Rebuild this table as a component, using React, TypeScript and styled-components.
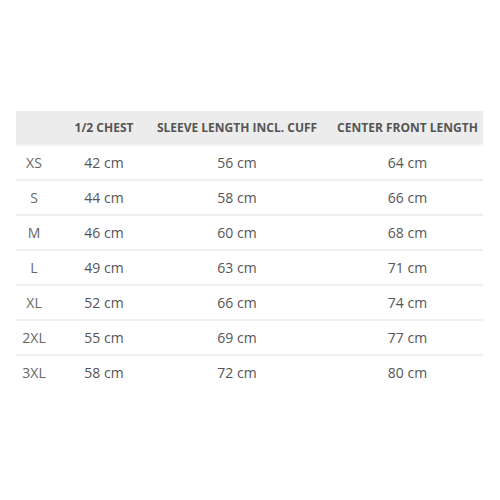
import styled, { createGlobalStyle } from "styled-components";

const GlobalStyle = createGlobalStyle`
  html, body {
    margin: 0;
    padding: 0;
    background: #ffffff;
  }
  body {
    font-family: "Open Sans", "Liberation Sans", sans-serif;
    color: #555555;
  }
`;

const Page = styled.div`
  width: 500px;
  height: 500px;
  padding: 111px 17px 0 16px;
  box-sizing: border-box;
`;

const Table = styled.div`
  display: grid;
  grid-template-columns: 36px 104px 162px 165px;
  width: 467px;
`;

const HeaderRow = styled.div`
  display: contents;
`;

const HeadCell = styled.div<{ $shift?: number }>`
  height: 33px;
  background: #ececec;
  border-bottom: 2px solid #f4f4f4;
  display: flex;
  align-items: center;
  justify-content: center;
  padding-left: ${(p) => (p.$shift ?? 0) * 2}px;
  font-size: 12px;
  font-weight: 700;
  color: #555555;
  white-space: nowrap;
`;

const Row = styled.div`
  display: contents;
`;

const Cell = styled.div<{ $last?: boolean; $shift?: number; $size?: boolean }>`
  height: 33px;
  border-bottom: 2px solid ${(p) => (p.$last ? "transparent" : "#eeeeee")};
  display: flex;
  align-items: center;
  justify-content: center;
  padding-left: ${(p) => (p.$shift ?? 0) * 2}px;
  font-size: 14px;
  color: ${(p) => (p.$size ? "#666666" : "#555555")};
  white-space: nowrap;
`;

const headers = ["", "1/2 CHEST", "SLEEVE LENGTH INCL. CUFF", "CENTER FRONT LENGTH"];
const shifts = [0, 0, 0, 7];

const rows = [
  ["XS", "42 cm", "56 cm", "64 cm"],
  ["S", "44 cm", "58 cm", "66 cm"],
  ["M", "46 cm", "60 cm", "68 cm"],
  ["L", "49 cm", "63 cm", "71 cm"],
  ["XL", "52 cm", "66 cm", "74 cm"],
  ["2XL", "55 cm", "69 cm", "77 cm"],
  ["3XL", "58 cm", "72 cm", "80 cm"],
];

export default function App() {
  return (
    <>
      <GlobalStyle />
      <Page>
        <Table>
          <HeaderRow>
            {headers.map((h, i) => (
              <HeadCell key={i} $shift={shifts[i]}>
                {h}
              </HeadCell>
            ))}
          </HeaderRow>
          {rows.map((r, ri) => (
            <Row key={r[0]}>
              {r.map((v, ci) => (
                <Cell
                  key={ci}
                  $shift={shifts[ci]}
                  $size={ci === 0}
                  $last={ri === rows.length - 1}
                >
                  {v}
                </Cell>
              ))}
            </Row>
          ))}
        </Table>
      </Page>
    </>
  );
}
